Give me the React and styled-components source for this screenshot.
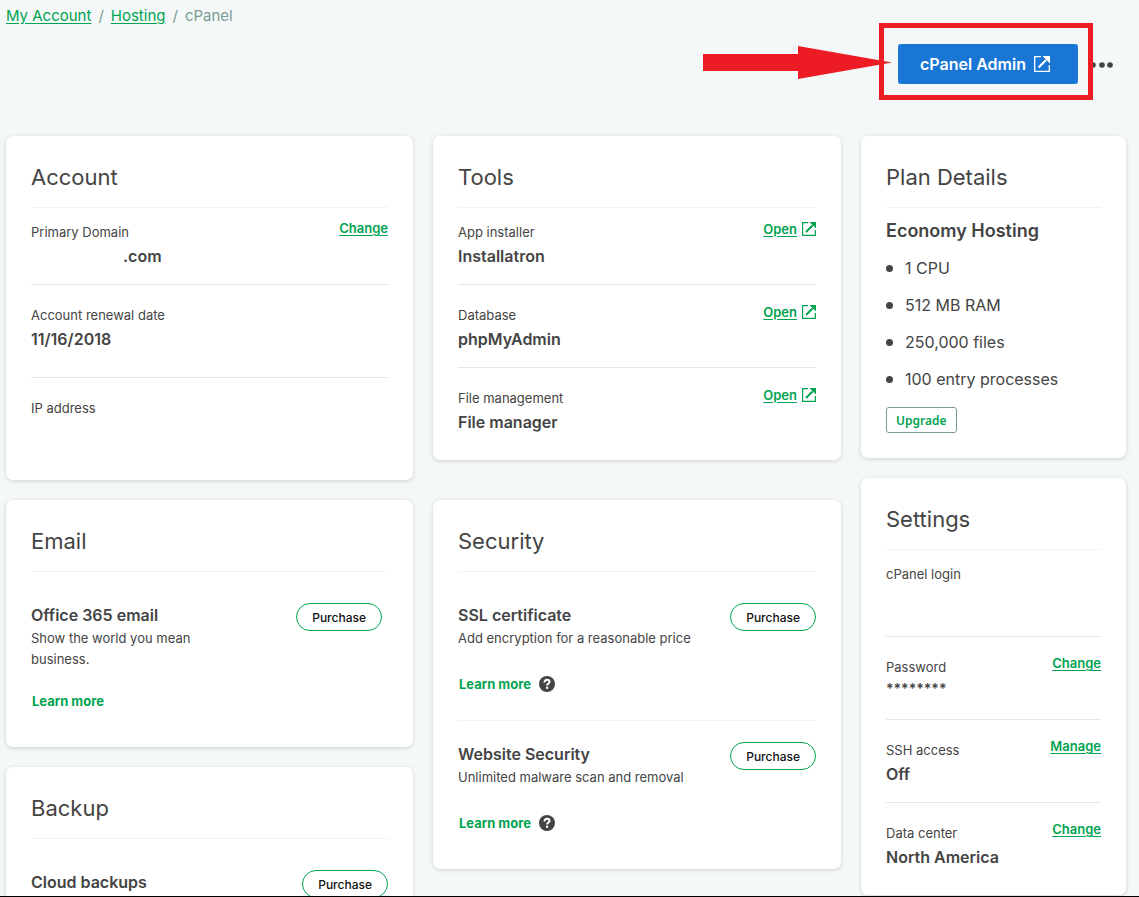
import React from 'react';
import styled, { createGlobalStyle } from 'styled-components';

const GlobalStyle = createGlobalStyle`
  * {
    box-sizing: border-box;
  }
  body {
    margin: 0;
    background: #f4f8f9;
    color: #444;
    font-family: Inter, 'Liberation Sans', sans-serif;
  }
`;

const Page = styled.div`
  height: 100vh;
  overflow: hidden;
  padding: 0 13px 0 6px;
  border-bottom: 1px solid #000;
`;

const Breadcrumb = styled.nav`
  display: flex;
  gap: 7px;
  font-size: 15px;
  line-height: 32px;
  color: #7a9b92;
`;

const Crumb = styled.a`
  color: #00a350;
  text-underline-offset: 2px;
`;

const Toolbar = styled.header`
  display: flex;
  justify-content: flex-end;
  margin: 12px 0 52px;
`;

/* Holds the admin button and the red callout drawn around it */
const Callout = styled.div`
  position: relative;
`;

const Frame = styled.span`
  position: absolute;
  inset: -21px -15px -16px -19px;
  border: 5px solid #ed1c24;
  pointer-events: none;
`;

const Arrow = styled.svg`
  position: absolute;
  top: 2px;
  right: 186px;
  pointer-events: none;
`;

const AdminButton = styled.button`
  display: flex;
  align-items: center;
  justify-content: center;
  gap: 8px;
  width: 180px;
  height: 40px;
  padding: 0 6px 0 0;
  border: 0;
  border-radius: 3px;
  background: #1976d5;
  color: #fff;
  font: 600 16px/24px Inter, sans-serif;
  cursor: pointer;
`;

const MoreButton = styled.button`
  display: flex;
  align-items: center;
  justify-content: center;
  width: 48px;
  padding: 2px 0 0;
  border: 0;
  background: none;
  color: #444;
  cursor: pointer;
`;

const Columns = styled.main`
  display: grid;
  grid-template-columns: 407fr 408fr 265fr;
  grid-template-rows: auto auto;
  gap: 20px;
  align-items: start;
`;

const Stack = styled.div`
  display: flex;
  flex-direction: column;
  gap: 20px;
`;

const SideStack = styled(Stack)`
  grid-column: 3;
  grid-row: 1 / 3;
`;

const CardBox = styled.section`
  padding: 25px 25px 24px;
  border-radius: 7px;
  background: #fff;
  box-shadow: 0 1px 4px rgba(0, 0, 0, 0.16);
`;

const CardTitle = styled.h2`
  margin: 0;
  padding-bottom: 14px;
  border-bottom: 1px solid #f2f4f4;
  font-size: 22px;
  font-weight: 400;
  line-height: 32px;
`;

const RowBox = styled.div`
  display: flex;
  justify-content: space-between;
  align-items: flex-start;
  padding: 20px 0 ${({ $tall }) => ($tall ? '24px' : '14px')};
  border-bottom: 1px solid #e6e6e6;

  &:first-of-type {
    padding-top: 14px;
  }
  &:last-of-type {
    padding-bottom: ${({ $tall }) => ($tall ? '10px' : '0')};
    border-bottom: 0;
  }
`;

const Label = styled.div`
  font-size: 13px;
  line-height: 20px;
`;

const Value = styled.div`
  min-height: 28px;
  padding-left: ${({ $hidden }) => ($hidden ? '92px' : '0')};
  font-size: 16px;
  font-weight: 600;
  line-height: 28px;
`;

const MaskedValue = styled(Value)`
  font-size: 14px;
  line-height: 24px;
`;

const RowLink = styled.a`
  display: flex;
  align-items: center;
  gap: 5px;
  color: #00a350;
  font-size: 13px;
  font-weight: 600;
  line-height: 12px;
  text-underline-offset: 2px;
`;

const PlanBody = styled.div`
  padding: 9px 0 1px;
`;

const PlanName = styled.h3`
  margin: 0;
  font-size: 18px;
  font-weight: 600;
  line-height: 28px;
`;

const Features = styled.ul`
  margin: 0 0 14px;
  padding: 0;
  list-style: none;
`;

const Feature = styled.li`
  display: flex;
  align-items: center;
  gap: 12px;
  margin-top: 10px;
  font-size: 16px;
  line-height: 27px;

  &::before {
    content: '';
    width: 7px;
    height: 7px;
    border-radius: 50%;
    background: #444;
  }
`;

const UpgradeButton = styled.button`
  display: block;
  height: 26px;
  padding: 1px 9px 0;
  border: 1px solid #7a9b92;
  border-radius: 3px;
  background: #fff;
  color: #00a350;
  font: 600 12px/22px 'Noto Sans', sans-serif;
  cursor: pointer;
`;

const OfferBox = styled.div`
  display: flex;
  justify-content: space-between;
  align-items: flex-start;
  padding: 21px ${({ $inset }) => ($inset ? '6px' : '0')} 26px 0;
  border-bottom: 1px solid #f2f4f4;

  &:first-of-type {
    padding-top: 31px;
  }
  &:last-of-type {
    padding-bottom: 12px;
    border-bottom: 0;
  }
`;

const OfferText = styled.div`
  max-width: ${({ $narrow }) => ($narrow ? '180px' : 'none')};
`;

const OfferName = styled.h3`
  margin: 0;
  font-size: 16px;
  font-weight: 600;
  line-height: 25px;
`;

const OfferNote = styled.p`
  margin: 0 0 ${({ $tight }) => ($tight ? '21px' : '25px')};
  font-size: 13px;
  line-height: 21px;
`;

const LearnRow = styled.div`
  display: flex;
  align-items: center;
  gap: 8px;
  padding-left: 1px;
`;

const LearnLink = styled.a`
  color: #00a350;
  font-size: 13px;
  font-weight: 700;
  line-height: 20px;
  text-decoration: none;
`;

const HelpButton = styled.button`
  display: flex;
  padding: 0;
  border: 0;
  background: none;
  color: #444;
  cursor: pointer;
`;

const PurchaseButton = styled.button`
  flex: none;
  height: 28px;
  padding: 1px 15px 0;
  border: 1px solid #00a350;
  border-radius: 14px;
  background: #fff;
  color: #111;
  font: 500 12px/24px Inter, sans-serif;
  cursor: pointer;
`;

function OpenIcon({ size }) {
  return (
    <svg width={size} height={size} viewBox="0 0 14 14" aria-hidden="true">
      <path d="M6 .6H.6v12.800h12.800V8" fill="none" stroke="currentColor" strokeWidth="1.200" />
      <path d="M4 10l6.500-6.500" fill="none" stroke="currentColor" strokeWidth="1.900" />
      <path d="M7.400 0H14v6.600z" fill="currentColor" />
    </svg>
  );
}

function HelpIcon() {
  return (
    <svg width="16" height="16" viewBox="0 0 16 16" aria-hidden="true">
      <circle cx="8" cy="8" r="8" fill="currentColor" />
      <path
        d="M5.500 6.400C5.500 4.600 6.500 3.800 8 3.800s2.500.8 2.500 2.100c0 1.800-2.400 1.700-2.400 3.500"
        fill="none"
        stroke="#fff"
        strokeWidth="2"
      />
      <circle cx="8.100" cy="11.800" r="1.200" fill="#fff" />
    </svg>
  );
}

function Card({ title, children }) {
  return (
    <CardBox>
      <CardTitle>{title}</CardTitle>
      {children}
    </CardBox>
  );
}

function Row({ label, value, action, external, tall, hidden, masked }) {
  return (
    <RowBox $tall={tall}>
      <div>
        <Label>{label}</Label>
        {masked ? <MaskedValue>{value}</MaskedValue> : <Value $hidden={hidden}>{value}</Value>}
      </div>
      {action && (
        <RowLink href="#">
          {action}
          {external && <OpenIcon size={14} />}
        </RowLink>
      )}
    </RowBox>
  );
}

function Offer({ name, note, help, inset }) {
  return (
    <OfferBox $inset={inset}>
      <OfferText $narrow={inset}>
        <OfferName>{name}</OfferName>
        {note && (
          <>
            <OfferNote $tight={!help}>{note}</OfferNote>
            <LearnRow>
              <LearnLink href="#">Learn more</LearnLink>
              {help && (
                <HelpButton aria-label={`Help with ${name}`}>
                  <HelpIcon />
                </HelpButton>
              )}
            </LearnRow>
          </>
        )}
      </OfferText>
      <PurchaseButton>Purchase</PurchaseButton>
    </OfferBox>
  );
}

const features = ['1 CPU', '512 MB RAM', '250,000 files', '100 entry processes'];

export default function App() {
  return (
    <Page>
      <GlobalStyle />
      <Breadcrumb aria-label="Breadcrumb">
        <Crumb href="#">My Account</Crumb>
        <span>/</span>
        <Crumb href="#">Hosting</Crumb>
        <span>/</span>
        <span>cPanel</span>
      </Breadcrumb>

      <Toolbar>
        <Callout>
          <AdminButton>
            cPanel Admin
            <OpenIcon size={16} />
          </AdminButton>
          <Frame />
          <Arrow width="189" height="33" viewBox="0 0 189 33" aria-hidden="true">
            <path d="M0 8H95V0L189 16.500L95 33V25H0z" fill="#ed1c24" />
          </Arrow>
        </Callout>
        <MoreButton aria-label="More options">
          <svg width="24" height="6" viewBox="0 0 24 6" aria-hidden="true">
            <circle cx="3" cy="3" r="2.800" fill="currentColor" />
            <circle cx="12" cy="3" r="2.800" fill="currentColor" />
            <circle cx="20" cy="3" r="2.800" fill="currentColor" />
          </svg>
        </MoreButton>
      </Toolbar>

      <Columns>
        <Card title="Account">
          <Row label="Primary Domain" value=".com" action="Change" hidden />
          <Row label="Account renewal date" value="11/16/2018" tall />
          <Row label="IP address" tall />
        </Card>

        <Card title="Tools">
          <Row label="App installer" value="Installatron" action="Open" external />
          <Row label="Database" value="phpMyAdmin" action="Open" external />
          <Row label="File management" value="File manager" action="Open" external />
        </Card>

        <SideStack>
          <Card title="Plan Details">
            <PlanBody>
              <PlanName>Economy Hosting</PlanName>
              <Features>
                {features.map((feature) => (
                  <Feature key={feature}>{feature}</Feature>
                ))}
              </Features>
              <UpgradeButton>Upgrade</UpgradeButton>
            </PlanBody>
          </Card>

          <Card title="Settings">
            <Row label="cPanel login" tall />
            <Row label="Password" value="********" action="Change" masked />
            <Row label="SSH access" value="Off" action="Manage" />
            <Row label="Data center" value="North America" action="Change" />
          </Card>
        </SideStack>

        <Stack>
          <Card title="Email">
            <Offer name="Office 365 email" note="Show the world you mean business." inset />
          </Card>
          <Card title="Backup">
            <Offer name="Cloud backups" />
          </Card>
        </Stack>

        <Card title="Security">
          <Offer name="SSL certificate" note="Add encryption for a reasonable price" help />
          <Offer name="Website Security" note="Unlimited malware scan and removal" help />
        </Card>
      </Columns>
    </Page>
  );
}
